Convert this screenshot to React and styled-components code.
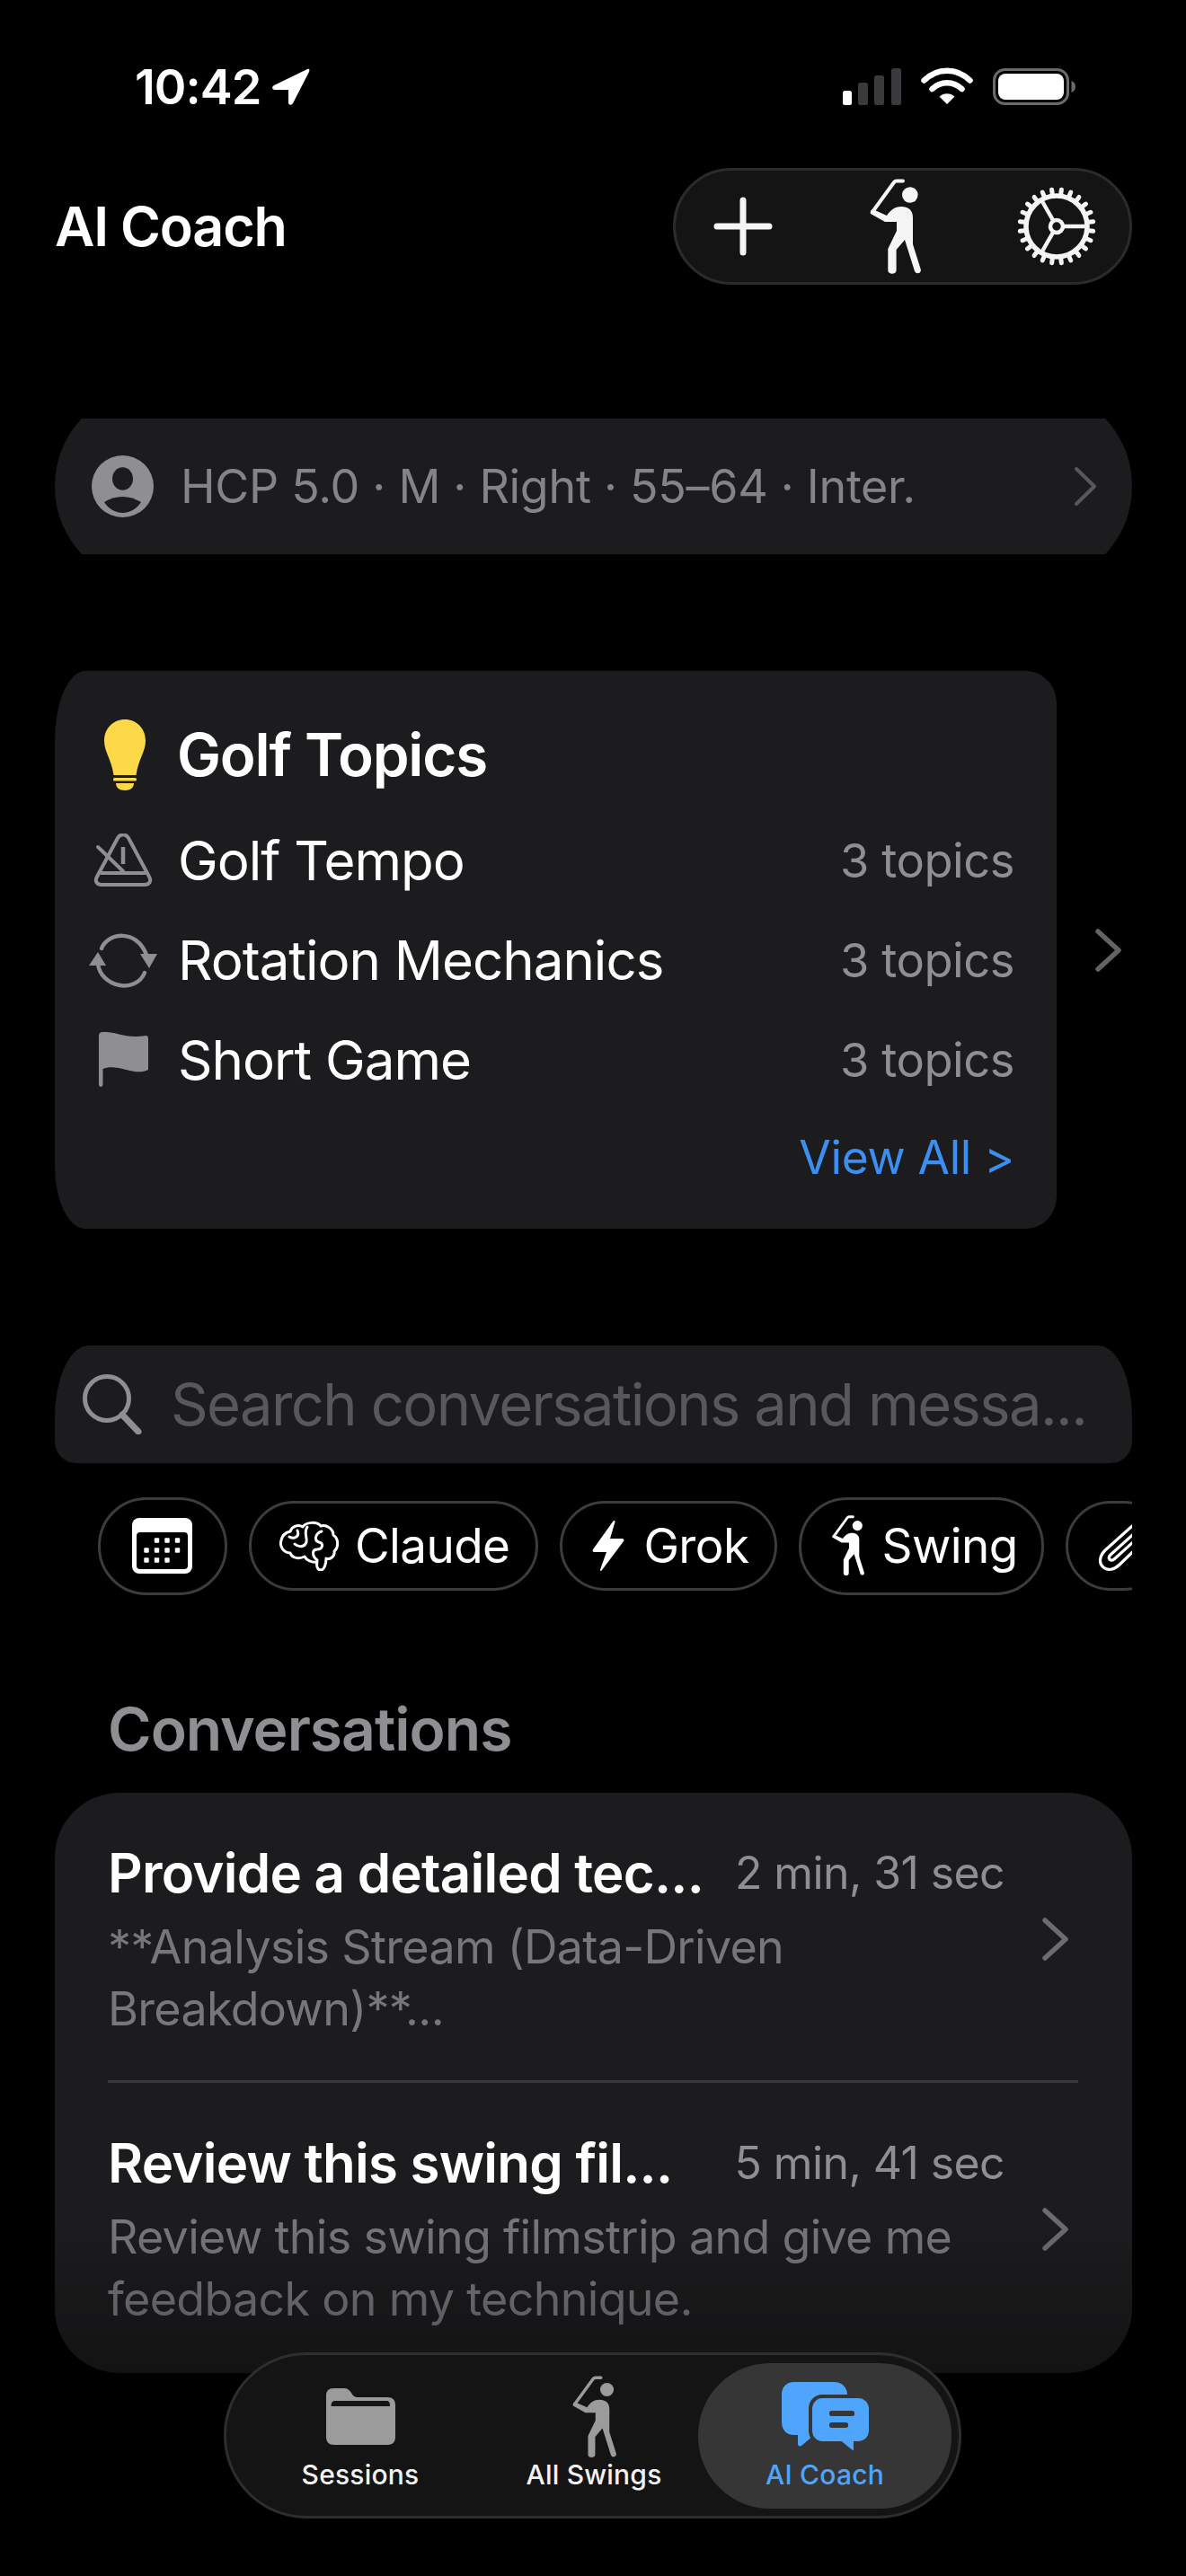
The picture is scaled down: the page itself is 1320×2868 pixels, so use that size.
import React from 'react';
import styled, { createGlobalStyle } from 'styled-components';

const Global = createGlobalStyle`
  html, body { margin: 0; padding: 0; background: #000; }
  * { box-sizing: border-box; }
  body { font-family: Inter, "Noto Sans", "Liberation Sans", sans-serif; color: #fff; -webkit-font-smoothing: antialiased; }
`;

const Page = styled.div`
  position: relative;
  width: 1320px;
  height: 2868px;
  overflow: hidden;
  padding: 0 60px 0 61px;
  background: #000;
`;

const StatusBar = styled.div`
  height: 187px;
  padding: 5px 63px 0 89px;
  display: flex;
  align-items: center;
  justify-content: space-between;
`;
const Time = styled.div`
  display: flex;
  align-items: center;
  gap: 13px;
  font-size: 54px;
  font-weight: 600;
  letter-spacing: -1px;
`;
const StatusIcons = styled.div`
  display: flex;
  align-items: center;
  gap: 22px;
`;

const Header = styled.header`
  height: 130px;
  display: flex;
  align-items: center;
  justify-content: space-between;
`;
const Title = styled.h1`
  margin: 0;
  font-size: 61px;
  line-height: 70px;
  font-weight: 600;
  letter-spacing: -1.2px;
`;
const ActionPill = styled.div`
  width: 511px;
  height: 130px;
  padding: 0 37px 0 42px;
  display: flex;
  align-items: center;
  justify-content: space-between;
  background: #141414;
  border: 3px solid #2b2b2b;
  border-radius: 65px;
`;

const ProfileCard = styled.div`
  position: relative;
  margin-top: 149px;
  height: 151px;
  padding: 0 38px 0 41px;
  display: flex;
  align-items: center;
  overflow: hidden;
  &::before {
    content: '';
    position: absolute;
    left: 0;
    right: 0;
    top: -34px;
    bottom: -34px;
    background: #1c1c1e;
    border-radius: 109px;
  }
  & > * {
    position: relative;
  }
`;
const ProfileText = styled.div`
  flex: 1;
  margin-left: 30px;
  font-size: 52px;
  letter-spacing: -0.3px;
  color: #838388;
`;

const Carousel = styled.div`
  margin-top: 130px;
  display: flex;
  align-items: center;
  gap: 43px;
`;
const TopicsCard = styled.section`
  width: 1115px;
  height: 621px;
  padding: 48px 47px 0 38px;
  background: #1c1c1e;
  border-radius: 34px 34px 34px 34px / 78px 36px 36px 70px;
`;
const TopicsHead = styled.div`
  height: 90px;
  padding-left: 17px;
  display: flex;
  align-items: center;
  gap: 35px;
`;
const TopicsTitle = styled.h2`
  margin: 0;
  font-size: 65.5px;
  font-weight: 600;
  letter-spacing: -1.2px;
`;
const TopicRows = styled.div`
  margin-top: 17px;
`;
const TopicRow = styled.div`
  height: 111px;
  display: flex;
  align-items: center;
`;
const TopicIcon = styled.div`
  width: 76px;
  margin-right: 23px;
  display: flex;
  justify-content: center;
`;
const TopicName = styled.div`
  flex: 1;
  font-size: 60px;
  letter-spacing: -1px;
`;
const TopicCount = styled.div`
  font-size: 52.5px;
  letter-spacing: -0.5px;
  color: #8e8e93;
`;
const ViewAll = styled.div`
  margin-top: 18px;
  height: 70px;
  line-height: 70px;
  text-align: right;
  font-size: 51.5px;
  letter-spacing: -0.3px;
  color: #3b8ff2;
`;

const SearchBar = styled.div`
  margin-top: 130px;
  height: 131px;
  padding: 0 0 0 31px;
  display: flex;
  align-items: center;
  gap: 32px;
  background: #1c1c1e;
  border-radius: 38px 38px 24px 24px / 80px 80px 24px 24px;
`;
const SearchText = styled.div`
  font-size: 65px;
  letter-spacing: -1.6px;
  color: #58585c;
  white-space: nowrap;
`;
const SearchGlyph = styled.div`
  flex: none;
  display: flex;
`;

const Chips = styled.div`
  margin-top: 37px;
  height: 110px;
  padding-left: 48px;
  display: flex;
  align-items: center;
  gap: 24px;
  overflow: hidden;
`;
const Chip = styled.div`
  flex: none;
  height: ${p => (p.$tall ? 109 : 100)}px;
  padding: 0 ${p => p.$right}px 0 ${p => p.$left}px;
  display: flex;
  align-items: center;
  gap: ${p => p.$gap || 18}px;
  border: 3px solid #3c3c3e;
  border-radius: 54px;
  font-size: 53px;
  letter-spacing: -0.6px;
  color: #fff;
`;

const SectionTitle = styled.h3`
  margin: 109px 0 31px 59px;
  height: 80px;
  line-height: 80px;
  font-size: 66px;
  font-weight: 600;
  letter-spacing: -1px;
  color: #8e8e93;
`;

const ListCard = styled.section`
  position: relative;
  height: 646px;
  overflow: hidden;
  background: #1c1c1e;
  border-radius: 72px;
  &::after {
    content: '';
    position: absolute;
    left: 0;
    right: 0;
    bottom: 0;
    height: 170px;
    background: linear-gradient(to bottom, rgba(0, 0, 0, 0), rgba(0, 0, 0, 0.32));
  }
`;
const ConvRow = styled.div`
  height: 323px;
  margin: 0 60px 0 59px;
  padding-top: 52px;
  display: flex;
  align-items: flex-start;
  border-bottom: ${p => (p.$second ? 'none' : '3px solid #38383a')};
`;
const ConvBody = styled.div`
  width: 998px;
`;
const ConvHead = styled.div`
  height: 74px;
  display: flex;
  align-items: center;
  justify-content: space-between;
`;
const ConvTitle = styled.div`
  font-size: 60px;
  font-weight: 600;
  letter-spacing: -0.75px;
`;
const ConvTime = styled.div`
  font-size: 50px;
  letter-spacing: -0.6px;
  color: #8e8e93;
`;
const ConvDesc = styled.div`
  margin-top: 11px;
  font-size: 52px;
  line-height: 69px;
  letter-spacing: -0.7px;
  color: #77777b;
`;
const ConvChevron = styled.div`
  margin: 87px 0 0 42px;
`;

const TabBar = styled.nav`
  position: absolute;
  left: 249px;
  top: 2619px;
  width: 821px;
  height: 185px;
  padding: 0 8px 0 33px;
  display: flex;
  align-items: center;
  background: #141414;
  border: 3px solid #2e2e2e;
  border-radius: 92px;
`;
const Tab = styled.div`
  width: ${p => (p.$active ? 282 : 232)}px;
  height: 162px;
  margin-right: ${p => (p.$first ? 28 : 0)}px;
  display: flex;
  flex-direction: column;
  align-items: center;
  justify-content: flex-end;
  padding-bottom: 20px;
  background: ${p => (p.$active ? '#363636' : 'transparent')};
  border-radius: 80px;
`;
const TabIcon = styled.div`
  height: 92px;
  display: flex;
  align-items: center;
  justify-content: center;
`;
const TabLabel = styled.div`
  height: 36px;
  line-height: 36px;
  font-size: 30px;
  font-weight: 500;
  letter-spacing: 0.2px;
  color: ${p => (p.$active ? '#4ea5fb' : '#f2f2f2')};
`;

const Golfer = ({ w, h, color = '#f5f5f5', stroke = 4 }) => (
  <svg width={w} height={h} viewBox="0 0 57 107" fill="none">
    <circle cx="44.8" cy="18" r="8.8" fill={color} />
    <path d="M3 37 L27 4 C28 2.6 29 2.5 30 2.5 L37 2.5" stroke={color} strokeWidth={stroke} strokeLinecap="round" strokeLinejoin="round" />
    <path fill={color} d="M1 39 C0 36 2 33.5 4.5 34.5 L19 41 C23 35 28 31 35 31 C43 31 48 35 48 43 L48 73 L56.8 101 C57.8 105 52 107 50 103 L39 68 L29.6 79 L29.6 102 C29.6 107 20.3 107 20.3 102 L20.3 78 L30 58 L30 48 L17 48 Z" />
  </svg>
);

const Plus = () => (
  <svg width="66" height="66" viewBox="0 0 66 66">
    <path d="M33 4 V62 M4 33 H62" stroke="#f5f5f5" strokeWidth="7" strokeLinecap="round" />
  </svg>
);

const teeth = Array.from({ length: 24 }, (_, i) => (i * 15 + 7.5) * Math.PI / 180);
const Gear = () => (
  <svg width="88" height="88" viewBox="-44 -44 88 88" fill="none" stroke="#f5f5f5">
    <circle r="34" strokeWidth="5.5" />
    {teeth.map((a, i) => (
      <line key={i} x1={36 * Math.cos(a)} y1={36 * Math.sin(a)} x2={41 * Math.cos(a)} y2={41 * Math.sin(a)} strokeWidth="5" strokeLinecap="round" />
    ))}
    <circle r="7" strokeWidth="4.5" />
    <path d="M7 0 H34 M-3.5 6 L-17 29.5 M-3.5 -6 L-17 -29.5" strokeWidth="4.5" />
  </svg>
);

const Chevron = ({ w, h, color, stroke = 5 }) => (
  <svg width={w} height={h} viewBox={`0 0 ${w} ${h}`} fill="none">
    <path d={`M3 3 L${w - 4} ${h / 2} L3 ${h - 3}`} stroke={color} strokeWidth={stroke} strokeLinecap="round" strokeLinejoin="round" />
  </svg>
);

const Avatar = () => (
  <svg width="69" height="69" viewBox="0 0 69 69">
    <circle cx="34.5" cy="34.5" r="34.5" fill="#8e8e93" />
    <ellipse cx="34.5" cy="26" rx="11.5" ry="12.7" fill="#1c1c1e" />
    <path d="M14 52 C20 48 27 46 34.5 46 C42 46 48 48 55 52 C50 60 42 64 34.5 64 C27 64 19 60 14 52Z" fill="#1c1c1e" />
  </svg>
);

const Bulb = () => (
  <svg width="46" height="79" viewBox="0 0 46 79" fill="#fdd848">
    <path d="M23 0 C36 0 46 10 46 24 C46 36 38 44 35.5 62 L10.5 62 C8 44 0 36 0 24 C0 10 10 0 23 0Z" />
    <rect x="10" y="65" width="26" height="3.5" rx="1.5" />
    <path d="M13 71 H33 C33 76 29 79 23 79 C17 79 13 76 13 71Z" />
  </svg>
);

const Metronome = () => (
  <svg width="66" height="60" viewBox="0 0 66 60" fill="none" stroke="#8e8e93">
    <path d="M27 5 C30 0 36 0 39 5 L62 48 C65 53 62 57 57 57 L9 57 C4 57 1 53 4 48 Z" strokeWidth="4" strokeLinejoin="round" />
    <path d="M8 44 H58" strokeWidth="4" />
    <path d="M5 15 L33 42" strokeWidth="4" strokeLinecap="round" />
    <path d="M33 15 V34" strokeWidth="4.5" />
  </svg>
);

const Rotate = () => (
  <svg width="76" height="64" viewBox="0 0 76 64" fill="none">
    <path d="M14 19 C21 1 53 -3 64 26" stroke="#8e8e93" strokeWidth="4.5" strokeLinecap="round" />
    <path d="M10 36 C13 62 52 70 62 46" stroke="#8e8e93" strokeWidth="4.5" strokeLinecap="round" />
    <path d="M57 25 H76 L67 41 Z" fill="#8e8e93" strokeLinejoin="round" />
    <path d="M0 38 H19 L10 23 Z" fill="#8e8e93" strokeLinejoin="round" />
  </svg>
);

const Flag = () => (
  <svg width="55" height="61" viewBox="0 0 55 61" fill="#8e8e93">
    <path d="M0 4 C0 1 2 0 4 0 C20 -1 28 8 52 4 C54 4 55 5 55 7 L55 42 C40 50 20 34 4.5 41 L4.5 58 C4.5 62 0 62 0 58 Z" />
  </svg>
);

const SearchIcon = () => (
  <svg width="66" height="67" viewBox="0 0 66 67" fill="none" stroke="#8e8e93">
    <circle cx="27" cy="27" r="24.5" strokeWidth="5" />
    <path d="M44 45 L62 64" strokeWidth="7" strokeLinecap="round" />
  </svg>
);

const calDots = [[27.5, 25], [39, 25], [50.5, 25], [16, 36], [27.5, 36], [39, 36], [50.5, 36], [16, 47], [27.5, 47], [39, 47]];
const CalendarIcon = () => (
  <svg width="67" height="62" viewBox="0 0 67 62">
    <rect width="67" height="62" rx="8" fill="#fff" />
    <rect x="5" y="16" width="57" height="41" rx="4" fill="#000" />
    {calDots.map(([x, y], i) => <rect key={i} x={x - 2.7} y={y - 2.7} width="5.4" height="5.4" rx="1" fill="#fff" />)}
  </svg>
);

const BrainIcon = () => (
  <svg width="66" height="56" viewBox="0 0 66 56" fill="none" stroke="#fff" strokeWidth="3" strokeLinecap="round" strokeLinejoin="round">
    <path d="M12 12 C14 6 21 4 26 7 C30 1 42 1 46 6 C52 4 60 9 60 16 C66 20 66 30 61 34 C62 40 56 44 52 42 C52 48 50 55 46 55 C42 55 41 50 42 46 C36 47 30 44 28 40 C22 43 14 42 12 36 C4 36 0 28 2 22 C3 16 8 13 12 12Z" />
    <path d="M20 11 C23 18 16 21 11 18" />
    <path d="M31 7 C26 15 33 21 29 26 C26 30 20 29 17 26" />
    <path d="M47 12 C40 14 38 22 44 24 C50 25 48 32 42 32 C36 32 36 39 42 44" />
  </svg>
);

const Bolt = () => (
  <svg width="36" height="56" viewBox="0 0 36 56" fill="#fff">
    <path d="M23.5 0.5 L1 32 C0 34 1 35 3 35 L16 35 L9 54.5 C8.5 56 10 56.5 11 55 L35 23 C36 21 35 20 33 20 L20 20 L25.5 1.5 C26 0 24.5 -0.5 23.5 0.5Z" />
  </svg>
);

const Clip = () => (
  <svg width="56" height="56" viewBox="0 0 56 56" fill="none" stroke="#fff" strokeWidth="3.2" strokeLinecap="round" strokeLinejoin="round">
    <path d="M54 3 C48 0 42 2 37 7 L8 33 C1 40 1 48 6 52 C11 56 18 55 24 49 L54 20" />
    <path d="M50 14 L18 43 C14 46 10 42 14 38 L44 11" />
  </svg>
);

const Folder = () => (
  <svg width="77" height="63" viewBox="0 0 77 63">
    <path fill="#9b9b9b" d="M8 0 L20 0 C24 0 26 2 28 5 C30 9 32 10 36 10 L68 10 C74 10 77 13 77 19 L77 54 C77 60 74 63 68 63 L9 63 C3 63 0 60 0 54 L0 8 C0 3 3 0 8 0Z" />
    <path fill="#141414" d="M9 14 H68 C70 14 71 16 71 20 H5.5 C5.5 16 7 14 9 14Z" />
  </svg>
);

const Chat = () => (
  <svg width="97" height="78" viewBox="0 0 97 78">
    <path fill="#4ea5fb" d="M14 0 H58 C67 0 73 6 73 14 L73 44 C73 53 67 59 58 59 L36 59 L22 71 C20 72 18 71 18 69 L18 59 L14 59 C5 59 0 53 0 44 L0 14 C0 6 5 0 14 0Z" />
    <path fill="#4ea5fb" stroke="#363636" strokeWidth="4" d="M45 16 H85 C93 16 99 22 99 30 L99 54 C99 62 93 68 85 68 L82 68 L82 75 C82 78 79 79 77 77 L66 68 L45 68 C38 68 32 62 32 54 L32 30 C32 22 38 16 45 16Z" />
    <rect x="53" y="32" width="28" height="6" rx="2.5" fill="#363636" />
    <rect x="53" y="45" width="21" height="6" rx="2.5" fill="#363636" />
  </svg>
);

const Location = () => (
  <svg width="42" height="41" viewBox="0 0 42 41" fill="#fff">
    <path d="M39 1 L2 19 C-1 21 0 24 3 24 L18 24 L18 38 C18 41 21 42 23 39 L41 4 C42 1 41 0 39 1Z" />
  </svg>
);

const Signal = () => (
  <svg width="65" height="41" viewBox="0 0 65 41">
    <rect x="0" y="25" width="10" height="16" rx="2.5" fill="#fff" />
    <rect x="17" y="16" width="11" height="25" rx="2.5" fill="#3a3a3c" />
    <rect x="35" y="8" width="11" height="33" rx="2.5" fill="#3a3a3c" />
    <rect x="54" y="0" width="11" height="41" rx="2.5" fill="#3a3a3c" />
  </svg>
);

const Wifi = () => (
  <svg width="58" height="42" viewBox="0 0 58 42" fill="none" stroke="#fff" strokeWidth="6.5">
    <path d="M3.5 14.5 C18 0 40 0 54.5 14.5" strokeLinecap="round" />
    <path d="M12.5 24 C22 15 36 15 45.5 24" strokeLinecap="round" />
    <path d="M29 41 L20.5 32.5 C25 28 33 28 37.5 32.5 Z" fill="#fff" stroke="none" />
  </svg>
);

const Battery = () => (
  <svg width="92" height="41" viewBox="0 0 92 41">
    <rect x="1.5" y="1.5" width="82" height="38" rx="12" fill="none" stroke="#6a6a6c" strokeWidth="3" />
    <rect x="6" y="6" width="73" height="29" rx="8" fill="#fff" />
    <path d="M87.5 14 C90 15 92 17 92 20.5 C92 24 90 26 87.5 27 Z" fill="#6a6a6c" />
  </svg>
);

const topics = [
  { name: 'Golf Tempo', icon: <Metronome /> },
  { name: 'Rotation Mechanics', icon: <Rotate /> },
  { name: 'Short Game', icon: <Flag /> },
];

const conversations = [
  { title: 'Provide a detailed tec...', time: '2 min, 31 sec', desc: ['**Analysis Stream (Data-Driven', 'Breakdown)**...'] },
  { title: 'Review this swing fil...', time: '5 min, 41 sec', desc: ['Review this swing filmstrip and give me', 'feedback on my technique.'], second: true },
];

export default function App() {
  return (
    <Page>
      <Global />
      <StatusBar>
        <Time>10:42<Location /></Time>
        <StatusIcons><Signal /><Wifi /><Battery /></StatusIcons>
      </StatusBar>
      <Header>
        <Title>AI Coach</Title>
        <ActionPill>
          <Plus />
          <Golfer w={57} h={107} />
          <Gear />
        </ActionPill>
      </Header>
      <ProfileCard>
        <Avatar />
        <ProfileText>HCP 5.0 · M · Right · 55–64 · Inter.</ProfileText>
        <Chevron w={27} h={45} color="#58585b" stroke={4} />
      </ProfileCard>
      <Carousel>
        <TopicsCard>
          <TopicsHead>
            <Bulb />
            <TopicsTitle>Golf Topics</TopicsTitle>
          </TopicsHead>
          <TopicRows>
            {topics.map(t => (
              <TopicRow key={t.name}>
                <TopicIcon>{t.icon}</TopicIcon>
                <TopicName>{t.name}</TopicName>
                <TopicCount>3 topics</TopicCount>
              </TopicRow>
            ))}
          </TopicRows>
          <ViewAll>View All &gt;</ViewAll>
        </TopicsCard>
        <Chevron w={30} h={48} color="#636366" stroke={5.5} />
      </Carousel>
      <SearchBar>
        <SearchGlyph><SearchIcon /></SearchGlyph>
        <SearchText>Search conversations and messa...</SearchText>
      </SearchBar>
      <Chips>
        <Chip $tall $left={35} $right={36}><CalendarIcon /></Chip>
        <Chip $left={31} $right={29}><BrainIcon />Claude</Chip>
        <Chip $left={33} $right={28} $gap={21}><Bolt />Grok</Chip>
        <Chip $tall $left={34} $right={26} $gap={20}><Golfer w={36} h={68} color="#fff" stroke={4.5} />Swing</Chip>
        <Chip $left={33} $right={20}><Clip /></Chip>
      </Chips>
      <SectionTitle>Conversations</SectionTitle>
      <ListCard>
        {conversations.map(c => (
          <ConvRow key={c.title} $second={c.second}>
            <ConvBody>
              <ConvHead>
                <ConvTitle>{c.title}</ConvTitle>
                <ConvTime>{c.time}</ConvTime>
              </ConvHead>
              <ConvDesc>{c.desc[0]}<br />{c.desc[1]}</ConvDesc>
            </ConvBody>
            <ConvChevron><Chevron w={30} h={48} color="#6c6c70" stroke={5.5} /></ConvChevron>
          </ConvRow>
        ))}
      </ListCard>
      <TabBar>
        <Tab $first>
          <TabIcon><Folder /></TabIcon>
          <TabLabel>Sessions</TabLabel>
        </Tab>
        <Tab>
          <TabIcon><Golfer w={49} h={92} color="#9b9b9b" /></TabIcon>
          <TabLabel>All Swings</TabLabel>
        </Tab>
        <Tab $active>
          <TabIcon><Chat /></TabIcon>
          <TabLabel $active>AI Coach</TabLabel>
        </Tab>
      </TabBar>
    </Page>
  );
}
